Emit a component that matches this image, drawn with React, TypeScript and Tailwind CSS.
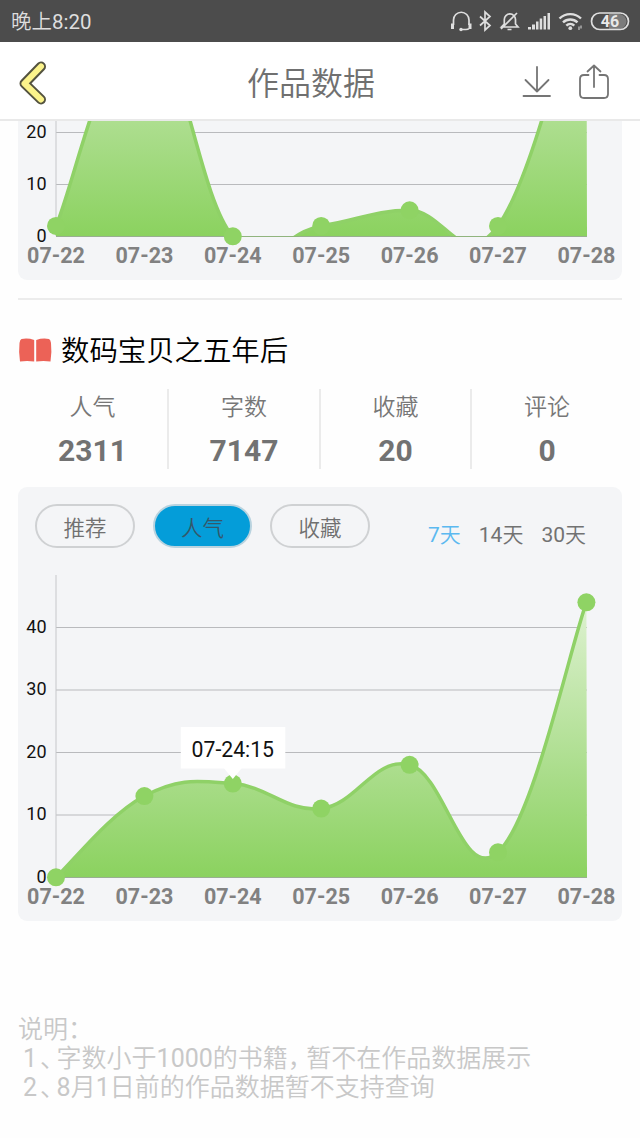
import React from "react";

const DAYS = ["07-22", "07-23", "07-24", "07-25", "07-26", "07-27", "07-28"];

// plot area inside the svg
const LEFT = 38;
const STEP = 88.4;
const BASE = 317;
const TOP = 15;

interface ChartProps {
    id: string;
    values: number[];
    ticks: number[];
    unit: number;
    selected?: number;
}

interface Stat {
    label: string;
    value: string;
}

const stats: Stat[] = [
    { label: "人气", value: "2311" },
    { label: "字数", value: "7147" },
    { label: "收藏", value: "20" },
    { label: "评论", value: "0" },
];

const curvePath = (points: Array<[number, number]>) => {
    const at = (i: number) => points[Math.max(0, Math.min(points.length - 1, i))];
    let d = `M${points[0][0]} ${points[0][1]}`;
    for (let i = 1; i < points.length; i++) {
        const [x0, y0] = at(i - 1);
        const [x1, y1] = at(i);
        const c1x = x0 + (x1 - at(i - 2)[0]) * 0.2;
        const c1y = y0 + (y1 - at(i - 2)[1]) * 0.2;
        const c2x = x1 - (at(i + 1)[0] - x0) * 0.2;
        const c2y = y1 - (at(i + 1)[1] - y0) * 0.2;
        d += ` C${c1x} ${c1y} ${c2x} ${c2y} ${x1} ${y1}`;
    }
    return d;
};

const AreaChart: React.FC<ChartProps> = ({ id, values, ticks, unit, selected }) => {
    const points = values.map((v, i): [number, number] => [LEFT + i * STEP, BASE + 0.3 - v * unit]);
    const line = curvePath(points);
    const right = LEFT + 6 * STEP + 0.6;

    return (
        <svg width="604" height="361" viewBox="0 0 604 361" className="block shrink-0 font-['Roboto',sans-serif]">
            <defs>
                <linearGradient id={`${id}-fill`} gradientUnits="userSpaceOnUse" x1="0" y1={TOP} x2="0" y2={BASE}>
                    <stop offset="0" stopColor="#e6f5dc" />
                    <stop offset="0.68" stopColor="#a8dc88" />
                    <stop offset="1" stopColor="#8bd25f" />
                </linearGradient>
                <clipPath id={`${id}-clip`}>
                    <rect x={LEFT} y={TOP} width={right - LEFT} height={BASE - TOP + 0.5} />
                </clipPath>
            </defs>
            {ticks.map((t) => (
                <line key={t} x1={LEFT} x2={right} y1={BASE - t * unit + 0.5} y2={BASE - t * unit + 0.5} stroke="#b9babd" />
            ))}
            <line x1={LEFT} x2={LEFT} y1={TOP} y2={BASE} stroke="#c6c7ca" />
            <g clipPath={`url(#${id}-clip)`}>
                <path d={`${line} L${right} ${BASE} L${LEFT} ${BASE} Z`} fill={`url(#${id}-fill)`} />
                <path d={line} fill="none" stroke="#8fd167" strokeWidth="3.5" />
            </g>
            <line x1={LEFT} x2={right} y1={BASE + 0.5} y2={BASE + 0.5} stroke="#84a873" strokeOpacity="0.6" />
            {points.map(([x, y], i) => (
                <circle key={i} cx={x} cy={y} r="9" fill="#8fd364" />
            ))}
            {ticks.map((t) => (
                <text key={t} x="28.5" y={BASE - t * unit + 5.5} textAnchor="end" fontSize="18" fill="#111">{t}</text>
            ))}
            {DAYS.map((day, i) => (
                <text key={day} x={LEFT + i * STEP} y="344" textAnchor="middle" fontSize="21.5" fontWeight="700" fill="#818181">{day}</text>
            ))}
            {selected !== undefined && (
                <g>
                    <rect x={points[selected][0] - 52} y="167" width="104.5" height="41.5" fill="#fff" />
                    <path d={`M${points[selected][0] - 9} 208 h18 l-9 11 z`} fill="#fff" />
                    <text x={points[selected][0]} y="196.5" textAnchor="middle" fontSize="21.2" fill="#111">
                        {DAYS[selected]}:{values[selected]}
                    </text>
                </g>
            )}
        </svg>
    );
};

const StatusBar = () => (
    <div className="flex h-[42px] items-center justify-between bg-[#4c4c4c] pl-[11px] pr-[10px] text-[20.5px] text-[#dedede]">
        <span className="pt-[3px] font-[350]">晚上<span className="font-normal">8:20</span></span>
        <svg width="181" height="24" viewBox="0 0 181 24" fill="none" stroke="#dedede" strokeWidth="1.7">
            {/* headset */}
            <path d="M4.500 16V11a7.500 7.500 0 0 1 15.500 0v5M20 19.500q-1 1-3 1h-5" />
            <path d="M3.500 14.500v5.500M21 14.500v5.500" strokeWidth="3" />
            <circle cx="12" cy="20.500" r="1.700" fill="#dedede" stroke="none" />
            {/* bluetooth */}
            <path d="M31 7.500l10 9-5 4.500V3l5 4.500-10 9" />
            {/* muted bell */}
            <path d="M52.500 18h16.500l-2.500-3V10.500a5.600 5.600 0 0 0-11.200 0V15zM52 20L68 4M58.500 20.500h4" />
            {/* signal */}
            <g fill="#dedede" stroke="none">
                <rect x="79" y="18" width="3" height="2.500" />
                <rect x="83" y="15.500" width="3" height="5" />
                <rect x="87" y="12.500" width="2.500" height="8" />
                <rect x="90.700" y="9.500" width="2.500" height="11" />
                <rect x="94.500" y="7" width="2.500" height="13.500" />
                <rect x="98.500" y="4" width="2.500" height="16.500" />
            </g>
            {/* wifi */}
            <path d="M110.500 9.500a15.500 15.500 0 0 1 21.500 0M114 13.400a10.500 10.500 0 0 1 14.500 0M117.300 16.600a5.800 5.800 0 0 1 8 0" strokeWidth="2.400" />
            <circle cx="121.300" cy="19.200" r="1.900" fill="#dedede" stroke="none" />
            <path d="M130 17.500v3.500M132 16.500v3" strokeWidth="1" />
            {/* battery */}
            <path d="M160 5h10a7.500 7.500 0 0 1 0 15h-10z" fill="#7b7b7b" stroke="none" />
            <rect x="142.500" y="4" width="37" height="16.500" rx="8.250" />
            <text x="161" y="18" textAnchor="middle" fontSize="16" fontWeight="700" fill="#e8e8e8" stroke="none">46</text>
        </svg>
    </div>
);

const Header = () => (
    <header className="flex h-[79px] items-center justify-between border-b-2 border-[#e9e9e9] bg-white pl-[18px] pr-[30px]">
        <svg width="78" height="46" viewBox="0 0 78 46" className="mt-[5px]" fill="none" strokeLinecap="round" strokeLinejoin="round">
            <path d="M23 6.500L6.500 23.500 23 39.500" stroke="#54533f" strokeWidth="10" />
            <path d="M23 6.500L6.500 23.500 23 39.500" stroke="#fbf38b" strokeWidth="6" />
        </svg>
        <h1 className="pt-[7px] pl-[4px] text-[32px] font-[350] leading-none text-[#707070]">作品数据</h1>
        <svg width="88" height="40" viewBox="0 0 88 40" fill="none" stroke="#757575" strokeWidth="1.800" strokeLinecap="round" strokeLinejoin="round">
            <path d="M15 6v24.500M3.500 19L15 30.500 26.500 19M1.500 35h26.500" />
            <path d="M66.500 14H62q-4 0-4 4v15q0 4 4 4h20q4 0 4-4V18q0-4-4-4h-4.500M72 26V4.500M65.500 10.500L72 4.500l6.500 6" />
        </svg>
    </header>
);

const App: React.FC = () => {
    return (
        <div className="flex h-[1138px] w-[640px] flex-col overflow-hidden bg-[#fefefe] font-['Roboto','Noto_Sans_CJK_SC',sans-serif]">
            <StatusBar />
            <Header />

            <main className="flex flex-col px-[18px]">
                <div className="flex h-[159px] flex-col justify-end overflow-hidden rounded-b-[9px] bg-[#f4f5f7]">
                    <AreaChart id="first" values={[2, 41, 0, 2, 5, 2, 52]} ticks={[0, 10, 20]} unit={5.2} />
                </div>
                <div className="mt-[18px] h-[2px] bg-[#ececec]" />

                <div className="mt-[30px] flex h-10 items-center gap-[9px]">
                    <svg width="34" height="26" viewBox="0 0 34 26" fill="#ec6257">
                        <path d="M16.200 3Q10 .8 3.500 2 2 2.500 1.500 6 .5 15 2 24.500 9 23.500 16.200 24.500zM18.200 3Q24.500 .8 31 2 32.500 2.500 33 6 34 15 32.500 24.500 25.500 23.500 18.200 24.500z" />
                    </svg>
                    <h2 className="pt-[4px] text-[28.4px] font-[350] leading-none text-black">数码宝贝之五年后</h2>
                </div>

                <div className="mt-[19px] grid h-20 grid-cols-[151px_152px_151px_150px] divide-x-2 divide-[#ebebeb]">
                    {stats.map((s) => (
                        <div key={s.label} className="flex flex-col items-center">
                            <span className="mt-[7px] text-[23px] font-[350] leading-[24px] text-[#777]">{s.label}</span>
                            <span className="mt-[15px] text-[30px] font-bold leading-[32px] text-[#727272]">{s.value}</span>
                        </div>
                    ))}
                </div>

                <section className="mt-[18px] flex h-[434px] flex-col justify-between overflow-hidden rounded-[9px] bg-[#f4f5f7]">
                    <div className="flex items-start justify-between pl-[17px] pr-[36px] pt-[17px] text-[21.5px]">
                        <div className="flex gap-[18px] font-[350] text-[#707070]">
                            <button className="h-[44px] w-[100px] rounded-full border-2 border-[#cfd1d3] pt-[6px]">推荐</button>
                            <button className="h-[44px] w-[99px] rounded-full border-2 border-[#b9d3df] bg-[#049dd9] pt-[6px] text-[#34586a]">人气</button>
                            <button className="h-[44px] w-[100px] rounded-full border-2 border-[#cfd1d3] pt-[6px]">收藏</button>
                        </div>
                        <div className="flex gap-[18px] pt-[19px] text-[21px] leading-[24px] text-[#727272]">
                            <span className="text-[#5bb9f0]">7<span className="font-[350]">天</span></span>
                            <span>14<span className="font-[350]">天</span></span>
                            <span>30<span className="font-[350]">天</span></span>
                        </div>
                    </div>
                    <AreaChart id="second" values={[0, 13, 15, 11, 18, 4, 44]} ticks={[0, 10, 20, 30, 40]} unit={6.25} selected={2} />
                </section>

                <div className="mt-[94px] text-[25px] font-[350] leading-[29px] text-[#c8c8c8]">
                    <p>说明：</p>
                    <p className="pl-[5px]"><span className="font-normal">1</span><span className="ml-[3px] mr-[4px] [font-feature-settings:'halt']">、</span>字数小于<span className="font-normal">1000</span>的书籍<span className="mr-[6px] [font-feature-settings:'halt']">，</span>暂不在作品数据展示</p>
                    <p className="pl-[5px]"><span className="font-normal">2</span><span className="ml-[3px] mr-[4px] [font-feature-settings:'halt']">、</span><span className="font-normal">8</span>月<span className="font-normal">1</span>日前的作品数据暂不支持查询</p>
                </div>
            </main>
        </div>
    );
};

export default App;
